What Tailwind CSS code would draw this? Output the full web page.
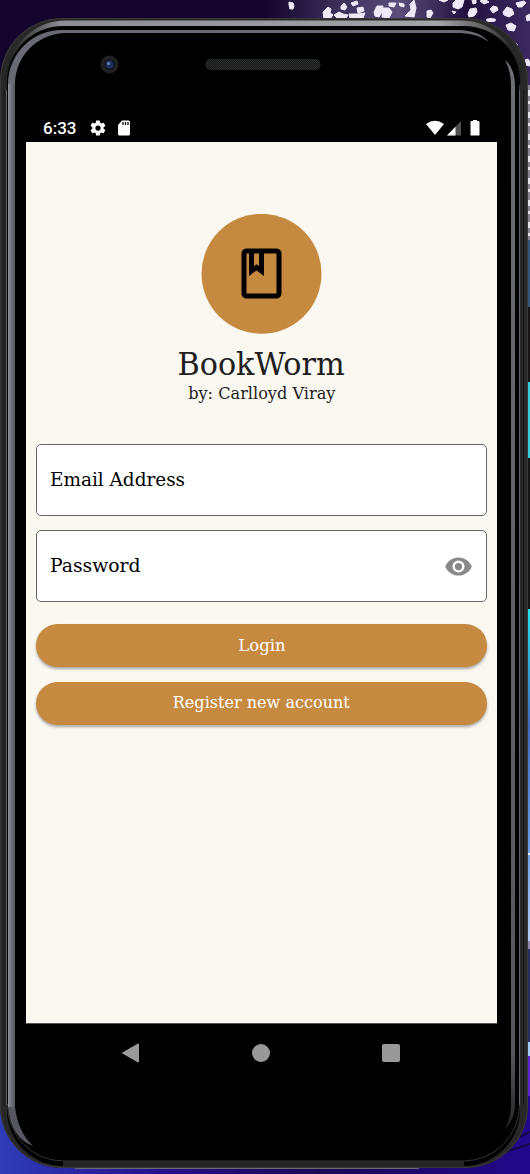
<!DOCTYPE html>
<html lang="en">
<head>
<meta charset="utf-8">
<title>BookWorm</title>
<script src="https://cdn.jsdelivr.net/npm/@tailwindcss/browser@4"></script>
</head>
<body class="h-[1174px] w-[530px] overflow-hidden bg-black">
<div class="relative h-[1174px] w-[530px] overflow-hidden">
  <!-- Wallpaper and handset shell -->
  <svg class="absolute inset-0" width="530" height="1174" viewBox="0 0 530 1174">
    <defs>
      <linearGradient id="sky"><stop stop-color="#12042d"/><stop offset=".5" stop-color="#13042c"/><stop offset=".6" stop-color="#30234d"/><stop offset=".75" stop-color="#5b4e7c"/><stop offset=".88" stop-color="#21113e"/><stop offset="1" stop-color="#3b2a60"/></linearGradient>
      <linearGradient id="sea"><stop stop-color="#303cb8"/><stop offset=".3" stop-color="#25108c"/><stop offset=".6" stop-color="#1b0855"/><stop offset="1" stop-color="#22088c"/></linearGradient>
      <linearGradient id="glow" x2="0" y2="1"><stop stop-color="#20e4ee"/><stop offset=".35" stop-color="#4069bd"/><stop offset=".7" stop-color="#669be4"/><stop offset="1" stop-color="#b3cdf5"/></linearGradient>
      <linearGradient id="chrome" gradientUnits="userSpaceOnUse" x1="10" y1="0" x2="515" y2="0"><stop stop-color="#222"/><stop offset=".1" stop-color="#8c8e92"/><stop offset=".85" stop-color="#a2a4a6"/><stop offset=".95" stop-color="#555"/><stop offset="1" stop-color="#222"/></linearGradient>
      <linearGradient id="side"><stop stop-color="#90939a"/><stop offset=".4" stop-color="#73767e"/><stop offset="1" stop-color="#54565e"/></linearGradient>
      <linearGradient id="topfade" gradientUnits="userSpaceOnUse" x1="0" y1="60" x2="0" y2="1130"><stop stop-color="#6d6f76"/><stop offset=".93" stop-color="#55575d"/><stop offset="1" stop-color="#222"/></linearGradient>
      <pattern id="mesh" width="2" height="2" patternUnits="userSpaceOnUse"><rect width="2" height="2" fill="#171a19"/><path d="M0 0h1v1H0zM1 1h1v1H1z" fill="#292d2c"/></pattern>
    </defs>
    <rect width="530" height="600" fill="url(#sky)"/>
    <rect y="1090" width="530" height="84" fill="url(#sea)"/>
    <g fill="#eee8f7">
      <path stroke="#eee8f7" stroke-width="1" stroke-linejoin="round" d="M289 2l4 1 1 3-1 3-3 0-1-4zM323 12l5-5 3 2-1 4 3 2-3 4h-6zM341 6l3-3 3 4-2 3-4-1zM334 15l5-3 4 2 5 1-2 3h-9zM351 3l6-2 1 3-5 2zM357 8l6-1 1 4-6 2zM349 14l8 0 8-1-2 5h-13zM374 12l3-6 6 0-1 6-3 5-4-1zM383 8l6 0 3 4-3 6-7-1zM389 3l7 0-2 4-5-1zM399 3l5 1v3l-4-1zM405 16l6-6-1-6 4-4 2 8-2 9zM427 11l4-1 2 3-3 5-3-1zM439 0h9l-4 2zM453 3l3-3h8l-2 7-4 2-5-2zM452 11l4 1-2 2zM468 14l2-5 6-1 1 4-3 4-5 1zM472 0h4v3l-3 1zM480 1l4-2 5 3-5 2zM490 9l3-3 4 1 1 3-5 3zM503 12l4-5 5 2 2 5-5 3-5-2zM506 25l5-2 5 3-2 5-6-1zM516 3l8-2 2 2-4 4h-4zM526 16l4-2v6l-3 1zM525 60l3-1 2 3v4l-4-1zM514 44l3 0v4z"/>
      <ellipse cx="491" cy="20" rx="5" ry="2"/>
    </g>
    <g>
      <rect x="524" y="85" width="6" height="155" fill="#898590"/>
      <path d="M529 90v150" stroke="#e5e3ea" stroke-width="2" stroke-dasharray="6 5 3 8"/>
      <rect x="524" y="240" width="6" height="67" fill="#345778"/>
      <rect x="524" y="307" width="6" height="75" fill="#161414"/>
      <rect x="524" y="382" width="6" height="76" fill="#35cfd9"/>
      <rect x="524" y="458" width="6" height="151" fill="#171616"/>
      <rect x="524" y="609" width="6" height="332" fill="url(#glow)"/>
      <rect x="524" y="853" width="6" height="2" fill="#e6f4ff"/>
      <rect x="524" y="941" width="6" height="8" fill="#9488b0"/>
      <rect x="524" y="949" width="6" height="93" fill="#292e61"/>
      <rect x="524" y="1042" width="6" height="14" fill="#a3cdf4"/>
      <rect x="524" y="1056" width="6" height="40" fill="#5a22d1"/>
    </g>
    <path d="M510 1141l20-9M490 1157l40-13" stroke="#160748" stroke-width="2"/>
    <rect x="0" y="18" width="528" height="1150" rx="62" fill="#292828"/>
    <rect x=".5" y="18.500" width="527" height="1149" rx="61.500" fill="none" stroke="#383838"/>
    <path d="M8 84A58 61 0 0 1 66 23.500H462A58 61 0 0 1 519 84" fill="none" stroke="url(#chrome)" stroke-width="6"/>
    <rect x="7" y="26" width="513" height="1140" rx="56" fill="#000"/>
    <path d="M519.500 85V1105A56 56 0 0 1 464 1161H64A56 56 0 0 1 7.500 1104" fill="none" stroke="#353535" stroke-width="1"/>
    <path d="M63 1163.500H464" stroke="#262626" stroke-width="5"/>
    <path d="M75 1168.500H419" stroke="#6c6b70"/>
    <path d="M6.500 90V1105M519.500 90V1105" stroke="#606164"/>
    <rect x="8" y="83" width="7" height="1025" fill="url(#side)"/>
    <path d="M8 84A54 54 0 0 1 62 30H460Q480 31 489 42Q479 34 461 33H66A51 51 0 0 0 15 84Z" fill="#686b73"/>
    <path d="M8 1107H15Q18 1132 33 1146Q11 1138 8 1107Z" fill="#54575f"/>
    <path d="M505 60Q515 68 515 86V1104Q515 1119 505 1129Q511 1118 511 1104V86Q511 71 505 60Z" fill="url(#topfade)"/>
    <path d="M4 90V1105M523.500 90V1105" stroke="#151515"/>
    <circle cx="109.500" cy="64.500" r="9" fill="#202122"/><circle cx="109.500" cy="64.500" r="5.200" fill="#0c0f1b"/><circle cx="109.500" cy="64.500" r="4" fill="#20305f"/><circle cx="108.500" cy="63.500" r="1.500" fill="#7183b5"/>
    <rect x="205.500" y="59" width="115" height="11" rx="5" fill="url(#mesh)"/>
  </svg>

  <div class="relative ml-[26px] flex h-full w-[471px] flex-col pt-[114px]">
    <header class="flex h-7 items-center justify-between pr-[17px] pl-[17px] text-white">
      <div class="flex items-center">
        <span class="w-[46px] font-['Roboto'] text-[17px] leading-7 font-medium">6:33</span>
        <svg class="mr-[10px]" width="18" height="18" viewBox="0 0 24 24" fill="currentColor"><path d="M19.400 13c.1-.7.1-1.300 0-2l2.200-1.700a.5.5 0 0 0 .1-.7l-2-3.400a.5.500 0 0 0-.7-.2l-2.500 1a8 8 0 0 0-1.700-1L14.400 2.400a.5.5 0 0 0-.5-.4h-4a.5.5 0 0 0-.5.4L9 5a8 8 0 0 0-1.700 1l-2.500-1a.5.5 0 0 0-.6.2l-2 3.400a.5.5 0 0 0 .1.700L4.500 11a8 8 0 0 0 0 2l-2.200 1.700a.5.500 0 0 0-.1.700l2 3.400c.1.200.4.300.6.200l2.500-1a8 8 0 0 0 1.700 1l.4 2.600c0 .2.200.4.500.4h4c.3 0 .5-.2.500-.4l.4-2.600a8 8 0 0 0 1.700-1l2.500 1c.2.100.5 0 .6-.2l2-3.400a.5.500 0 0 0-.1-.7zM12 15.500a3.500 3.500 0 1 1 0-7 3.500 3.500 0 0 1 0 7Z"/></svg>
        <svg width="14" height="16" viewBox="0 0 14 16"><path d="M5 .5h6.500a1.500 1.500 0 0 1 1.500 1.500v12a1.500 1.500 0 0 1-1.500 1.500h-9A1.500 1.500 0 0 1 1 14V5z" fill="#fff"/><path d="M6 2v3M8.500 2v3M11 2v3" stroke="#111" stroke-width="1.300"/></svg>
      </div>
      <div class="flex items-center">
        <svg width="18" height="16" viewBox="0 0 18 16" fill="#fff"><path d="M0 4Q9-2.600 18 4L9 15z"/></svg>
        <svg class="ml-[3px]" width="15" height="16" viewBox="0 0 15 16"><path d="M0 15.500 14 1v14.500z" fill="#505050"/><path d="M0 15.500 8.500 6.700v8.800z" fill="#fff"/></svg>
        <svg class="ml-[8px]" width="10" height="16" viewBox="0 0 10 16" fill="#fff"><path d="M3 0h4v1h1.500q1 0 1 1v13.500H.5V2q0-1 1-1H3z"/></svg>
      </div>
    </header>

    <main class="flex h-[881px] flex-col items-center bg-[#fbf8f1] px-[10px] pt-[72px] font-['DejaVu_Serif_Condensed','DejaVu_Serif',serif] text-[#202020]">
      <svg class="shrink-0" width="121" height="120" viewBox="0 0 121 120"><circle cx="60.500" cy="59.800" r="60" fill="#c58a40"/><path transform="translate(30.500 29.500) scale(2.500)" d="M18 2H6c-1.100 0-2 .9-2 2v16c0 1.100.9 2 2 2h12c1.100 0 2-.9 2-2V4c0-1.100-.9-2-2-2zM9 4h2v5l-1-.75L9 9V4zm9 16H6V4h1v9l3-2.250L13 13V4h5v16z"/></svg>
      <h1 class="mt-[10px] h-10 text-[31px] leading-[41px] whitespace-nowrap"><span class="inline-block scale-x-[1.085]">BookWorm</span></h1>
      <p class="h-5 text-[17px] leading-[18px] whitespace-nowrap"><span class="inline-block scale-x-[1.055]">by: Carlloyd Viray</span></p>

      <form class="mt-[40px] flex w-full flex-col">
        <label class="flex h-[72px] items-center rounded-[5px] border border-[#666] bg-white pb-[2px] pl-[13px] text-[19px] text-black"><span class="origin-left scale-x-[1.078]">Email Address</span></label>
        <label class="mt-[14px] flex h-[72px] items-center justify-between rounded-[5px] border border-[#666] bg-white pr-[13px] pl-[13px] text-[19px] text-black"><span class="origin-left scale-x-[1.1] pb-[2px]">Password</span>
          <svg width="29" height="29" viewBox="0 0 24 24" fill="#898989"><path d="M12 4.500C7 4.500 2.730 7.610 1 12c1.730 4.390 6 7.500 11 7.500s9.270-3.110 11-7.500c-1.730-4.390-6-7.500-11-7.500zM12 17a5 5 0 1 1 0-10 5 5 0 0 1 0 10zm0-8a3 3 0 1 0 0 6 3 3 0 0 0 0-6z"/></svg>
        </label>
        <button type="button" class="mt-[22px] h-[43px] rounded-full bg-[#c58a40] text-[17px] text-white shadow-[0_2px_3px_#0005]"><span class="inline-block scale-x-[1.08]">Login</span></button>
        <button type="button" class="mt-[14.500px] h-[43px] rounded-full bg-[#c58a40] text-[17px] text-white shadow-[0_2px_3px_#0005]"><span class="inline-block scale-x-[1.05]">Register new account</span></button>
      </form>
    </main>

    <nav class="flex h-[60px] items-center justify-between border-t border-[#555] pr-[97px] pb-[2px] pl-[95px]">
      <svg width="18" height="20" viewBox="0 0 18 20" fill="#999"><path d="M.5 10 17 .5q1 0 1 1v17q0 1-1 1z"/></svg>
      <div class="ml-[1px] size-[18px] rounded-full bg-[#999]"></div>
      <div class="size-[18px] rounded-[2px] bg-[#999]"></div>
    </nav>
  </div>
</div>
</body>
</html>
